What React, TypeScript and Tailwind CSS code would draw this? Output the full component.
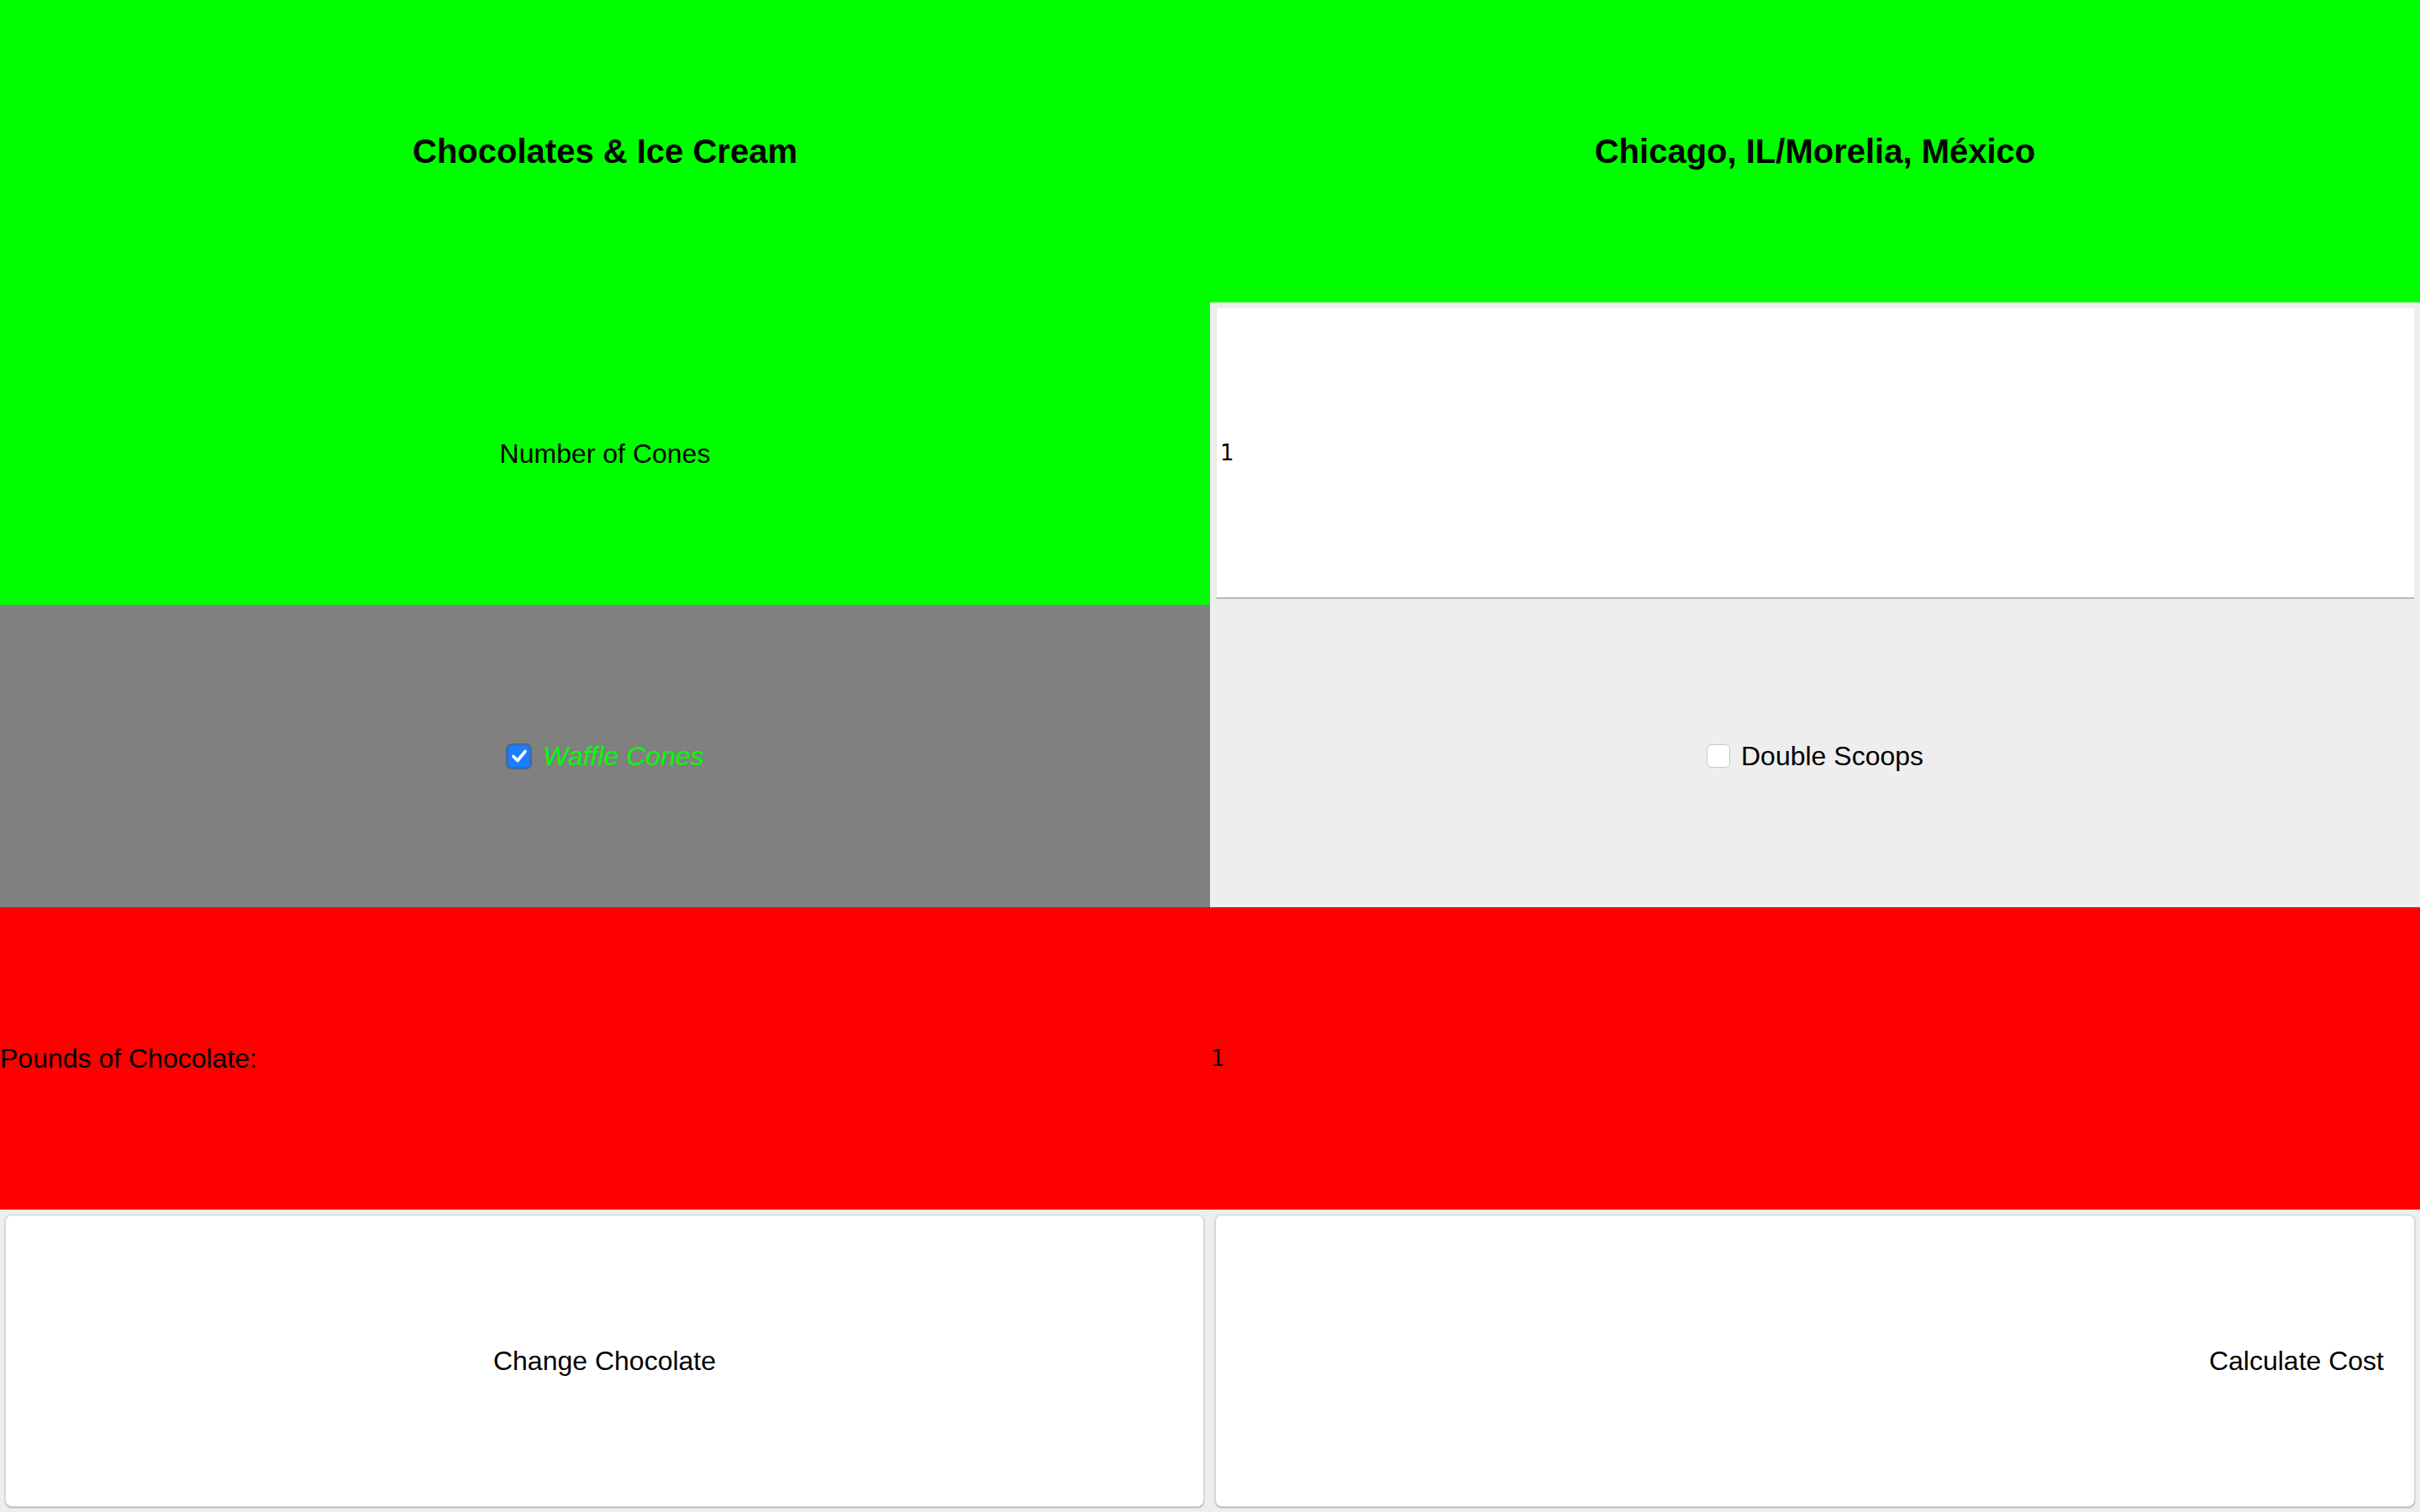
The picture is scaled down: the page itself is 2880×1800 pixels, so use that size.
import React from "react";

export default function App() {
  return (
    <div className="grid h-[1800px] w-[2880px] grid-cols-2 grid-rows-5 bg-[#eeeeee] font-['Liberation_Sans',Arial,sans-serif] text-black">
      <div className="flex items-center justify-center bg-[#00ff00]">
        <h1 className="text-[40px] font-bold">Chocolates &amp; Ice Cream</h1>
      </div>
      <div className="flex items-center justify-center bg-[#00ff00]">
        <h1 className="text-[40px] font-bold">Chicago, IL/Morelia, México</h1>
      </div>

      <div className="flex items-center justify-center bg-[#00ff00] text-[32px]">
        Number of Cones
      </div>
      <div className="flex p-[7px]">
        <div className="flex flex-1 items-center border-b-2 border-l border-b-[#b8b8b8] border-l-[#e4e4e4] bg-white px-[4px] font-['DejaVu_Sans',sans-serif] text-[26px]">
          1
        </div>
      </div>

      <div className="flex items-center justify-center gap-[13px] bg-[#808080] text-[32px]">
        <span className="flex h-[31px] w-[31px] items-center justify-center rounded-[7px] border-[3px] border-[#3f6aa6] bg-[#1a7eff]">
          <svg width="20" height="18" viewBox="0 0 20 18">
            <path d="M3 9.5 L8 14.5 L17 3.5" fill="none" stroke="white" strokeWidth="3.6" strokeLinecap="round" strokeLinejoin="round" />
          </svg>
        </span>
        <span className="italic text-[#00ff00]">Waffle Cones</span>
      </div>
      <div className="flex items-center justify-center gap-[13px] text-[32px]">
        <span className="h-[28px] w-[28px] rounded-[6px] border border-[#c8c8c8] bg-white" />
        <span>Double Scoops</span>
      </div>

      <div className="flex items-center bg-[#ff0000] text-[32px]">
        Pounds of Chocolate:
      </div>
      <div className="flex items-center bg-[#ff0000] pl-[1px] font-['DejaVu_Sans',sans-serif] text-[26px]">
        1
      </div>

      <div className="flex p-[6px] pr-[7px]">
        <button className="flex flex-1 items-center justify-center rounded-[8px] border border-[#d6d6d6] bg-white text-[32px] shadow-[0_1px_2px_rgba(0,0,0,0.3)]">
          Change Chocolate
        </button>
      </div>
      <div className="flex p-[6px] pl-[6px]">
        <button className="flex flex-1 items-center justify-end rounded-[8px] border border-[#d6d6d6] bg-white pr-[36px] text-[32px] shadow-[0_1px_2px_rgba(0,0,0,0.3)]">
          Calculate Cost
        </button>
      </div>
    </div>
  );
}
